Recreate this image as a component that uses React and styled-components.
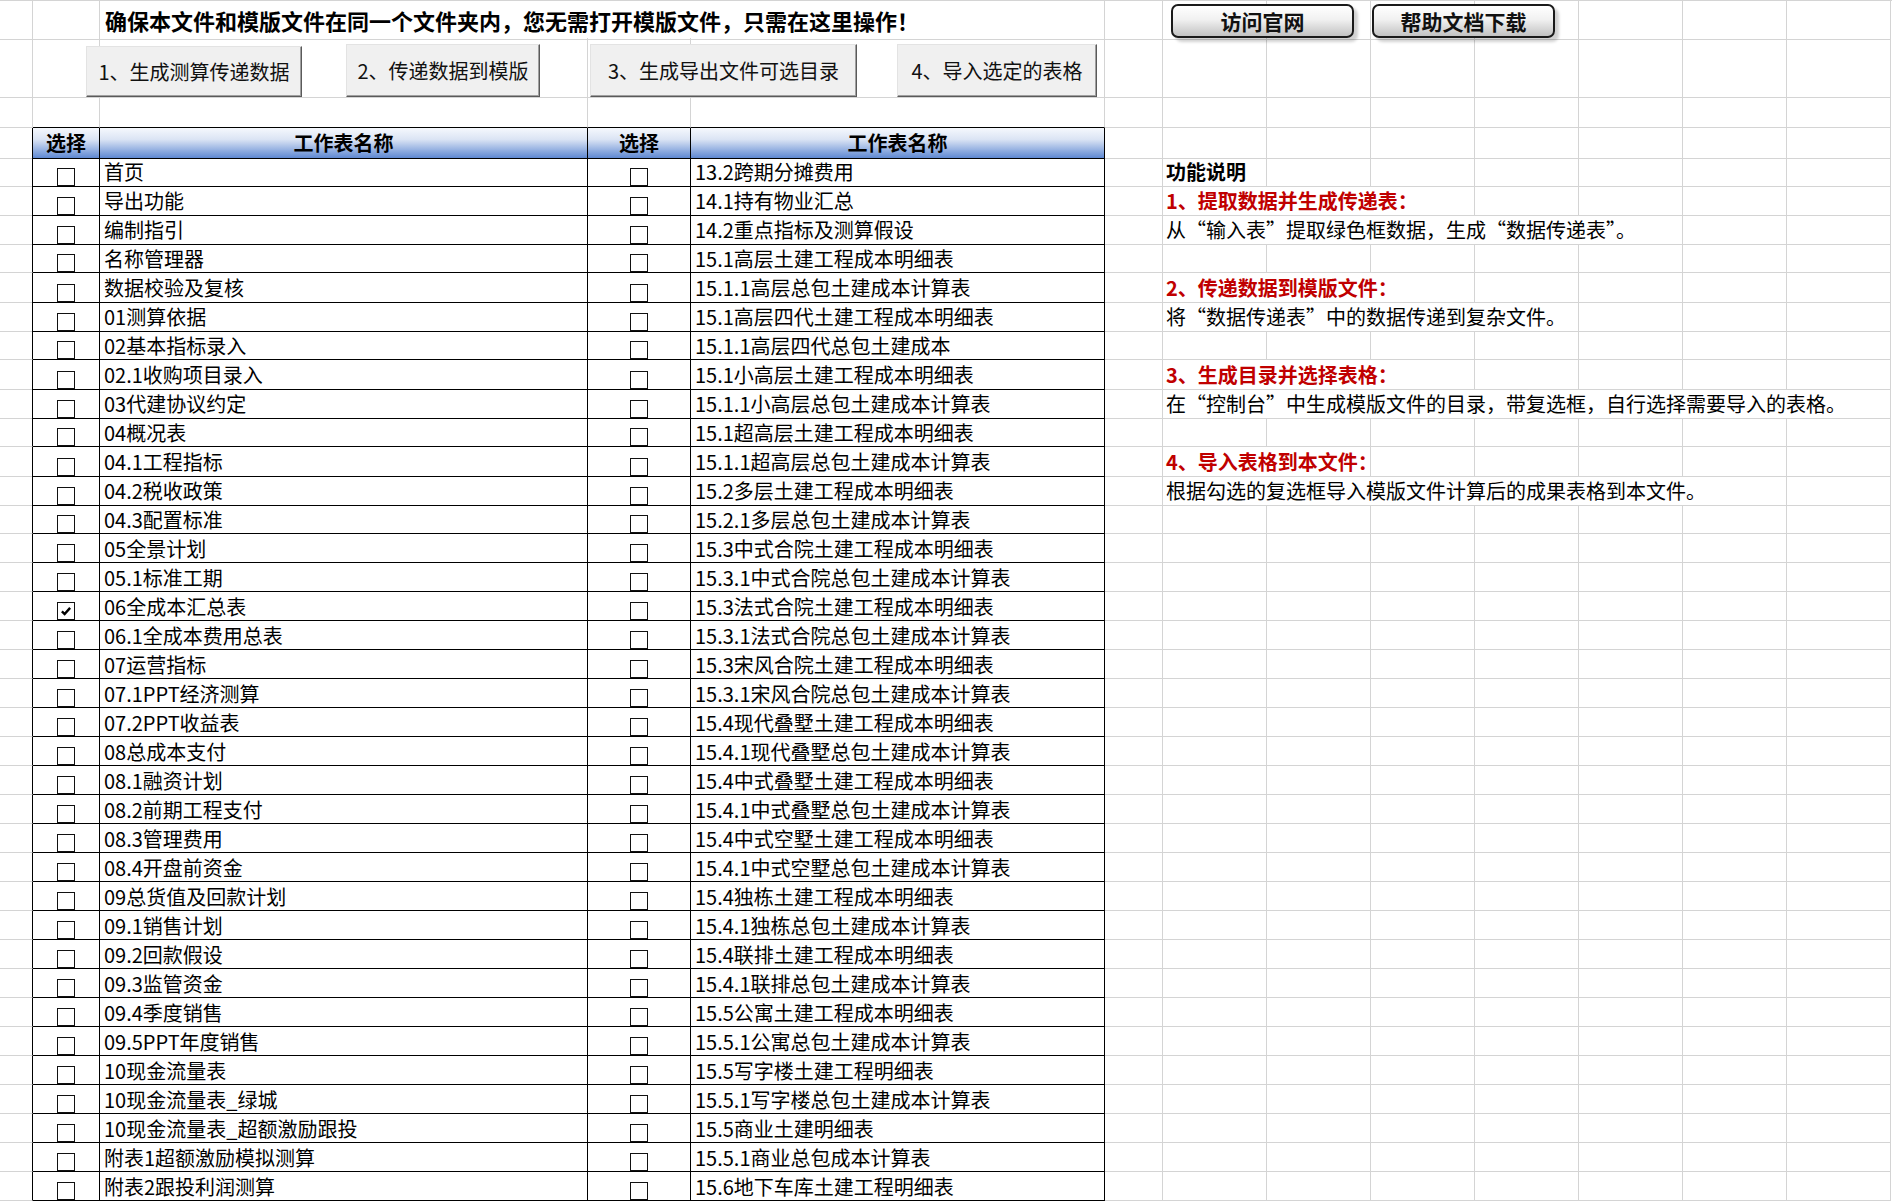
import React from 'react';
import styled, { createGlobalStyle } from 'styled-components';

const FONT = '"Noto Sans CJK SC", "Noto Sans", "Liberation Sans", sans-serif';
const GRID = '#d4d4d4';
const INK = '#000';
const COLS = '33px 67px 488px 103px 414px 58px repeat(7, 104px)';

const LEFT = [
  '首页', '导出功能', '编制指引', '名称管理器', '数据校验及复核', '01测算依据', '02基本指标录入',
  '02.1收购项目录入', '03代建协议约定', '04概况表', '04.1工程指标', '04.2税收政策', '04.3配置标准',
  '05全景计划', '05.1标准工期', '06全成本汇总表', '06.1全成本费用总表', '07运营指标', '07.1PPT经济测算',
  '07.2PPT收益表', '08总成本支付', '08.1融资计划', '08.2前期工程支付', '08.3管理费用', '08.4开盘前资金',
  '09总货值及回款计划', '09.1销售计划', '09.2回款假设', '09.3监管资金', '09.4季度销售', '09.5PPT年度销售',
  '10现金流量表', '10现金流量表_绿城', '10现金流量表_超额激励跟投', '附表1超额激励模拟测算', '附表2跟投利润测算',
];

const RIGHT = [
  '13.2跨期分摊费用', '14.1持有物业汇总', '14.2重点指标及测算假设', '15.1高层土建工程成本明细表',
  '15.1.1高层总包土建成本计算表', '15.1高层四代土建工程成本明细表', '15.1.1高层四代总包土建成本',
  '15.1小高层土建工程成本明细表', '15.1.1小高层总包土建成本计算表', '15.1超高层土建工程成本明细表',
  '15.1.1超高层总包土建成本计算表', '15.2多层土建工程成本明细表', '15.2.1多层总包土建成本计算表',
  '15.3中式合院土建工程成本明细表', '15.3.1中式合院总包土建成本计算表', '15.3法式合院土建工程成本明细表',
  '15.3.1法式合院总包土建成本计算表', '15.3宋风合院土建工程成本明细表', '15.3.1宋风合院总包土建成本计算表',
  '15.4现代叠墅土建工程成本明细表', '15.4.1现代叠墅总包土建成本计算表', '15.4中式叠墅土建工程成本明细表',
  '15.4.1中式叠墅总包土建成本计算表', '15.4中式空墅土建工程成本明细表', '15.4.1中式空墅总包土建成本计算表',
  '15.4独栋土建工程成本明细表', '15.4.1独栋总包土建成本计算表', '15.4联排土建工程成本明细表',
  '15.4.1联排总包土建成本计算表', '15.5公寓土建工程成本明细表', '15.5.1公寓总包土建成本计算表',
  '15.5写字楼土建工程明细表', '15.5.1写字楼总包土建成本计算表', '15.5商业土建明细表',
  '15.5.1商业总包成本计算表', '15.6地下车库土建工程明细表',
];

// help text on the right, keyed by body row; span = how many grid columns the text runs over
const HELP = {
  0: { text: '功能说明', span: 1, tone: 'title' },
  1: { text: '1、提取数据并生成传递表：', span: 3, tone: 'red' },
  2: { text: '从“输入表”提取绿色框数据，生成“数据传递表”。', span: 5 },
  4: { text: '2、传递数据到模版文件：', span: 3, tone: 'red' },
  5: { text: '将“数据传递表”中的数据传递到复杂文件。', span: 4 },
  7: { text: '3、生成目录并选择表格：', span: 3, tone: 'red' },
  8: { text: '在“控制台”中生成模版文件的目录，带复选框，自行选择需要导入的表格。', span: 7 },
  10: { text: '4、导入表格到本文件：', span: 2, tone: 'red' },
  11: { text: '根据勾选的复选框导入模版文件计算后的成果表格到本文件。', span: 6 },
};

const ACTIONS = [
  { label: '1、生成测算传递数据', w: 216, ml: 53, mt: 2 },
  { label: '2、传递数据到模版', w: 194, ml: 44, mt: 0 },
  { label: '3、生成导出文件可选目录', w: 267, ml: 50, mt: 0 },
  { label: '4、导入选定的表格', w: 200, ml: 40, mt: 0 },
];

const GlobalStyle = createGlobalStyle`
  html, body {
    margin: 0;
    padding: 0;
    background: #fff;
    overflow: hidden;
  }
`;

const Sheet = styled.div`
  width: 1892px;
  border-top: 1px solid ${GRID};
  font-family: ${FONT};
  color: #000;
`;

const Row = styled.div`
  display: grid;
  grid-template-columns: ${COLS};
  height: ${p => p.$h}px;
`;

const Cell = styled.div`
  box-sizing: border-box;
  min-width: 0;
  grid-column: span ${p => p.$span || 1};
  border-right: 1px solid ${p => p.$br || GRID};
  border-bottom: 1px solid ${p => p.$bb || GRID};
`;

const TitleCell = styled(Cell)`
  padding-left: 5px;
  font-size: 22px;
  font-weight: 700;
  line-height: 38px;
  white-space: nowrap;
`;

const HeaderCell = styled(Cell)`
  background: linear-gradient(to bottom, #f5f8fd 0%, #dbe4f4 38%, #9bb5e3 70%, #5f89d2 100%);
  text-align: center;
  font-size: 20px;
  font-weight: 700;
  line-height: 30px;
`;

const NameCell = styled(Cell)`
  padding-left: 4px;
  font-size: 20px;
  line-height: 29px;
  white-space: nowrap;
  overflow: hidden;
`;

const CheckCell = styled(Cell)`
  display: flex;
  justify-content: center;
  align-items: flex-end;
`;

const Box = styled.span`
  box-sizing: border-box;
  width: 18px;
  height: 18px;
  border: 1.5px solid #111;
  background: #fff;
  display: flex;
  align-items: center;
  justify-content: center;
`;

const HelpCell = styled(Cell)`
  padding-left: 3px;
  font-size: 20px;
  line-height: 29px;
  white-space: nowrap;
  font-weight: ${p => (p.$tone ? 700 : 400)};
  color: ${p => (p.$tone === 'red' ? '#c00000' : '#000')};
`;

// floating sheet shapes anchored in a cell and spilling over the grid
const ActionBar = styled.div`
  position: relative;
  z-index: 2;
  display: flex;
  align-items: flex-start;
  width: max-content;
  padding-top: 6px;
`;

const ActionButton = styled.button`
  box-sizing: border-box;
  width: ${p => p.$w}px;
  height: ${p => 53 - p.$mt}px;
  margin-left: ${p => p.$ml}px;
  margin-top: ${p => p.$mt}px;
  padding: 0;
  background: #f0f0f0;
  border: 1px solid;
  border-color: #e3e3e3 #5a5a5a #5a5a5a #e3e3e3;
  box-shadow: inset -1px -1px 0 #a0a0a0;
  font-family: ${FONT};
  font-size: 20px;
  color: #111;
`;

const LinkBar = styled.div`
  position: relative;
  z-index: 2;
  display: flex;
  gap: 18px;
  width: max-content;
  padding: 3px 0 0 8px;
`;

const LinkButton = styled.button`
  box-sizing: border-box;
  width: 183px;
  height: 34px;
  padding: 0;
  border: 2px solid #1a1a1a;
  border-radius: 7px;
  background: linear-gradient(to bottom, #ffffff 0%, #f1f1f1 45%, #c2c2c2 100%);
  box-shadow: 4px 4px 3px rgba(0, 0, 0, 0.18);
  font-family: ${FONT};
  font-size: 21px;
  font-weight: 700;
  color: #111;
`;

const blanks = n => Array.from({ length: n }, (_, k) => <Cell key={`b${k}`} />);

const CheckBox = ({ checked }) => (
  <Box>
    {checked && (
      <svg width="12" height="12" viewBox="0 0 14 14">
        <path d="M2.2 7.4 L5.4 10.6 L11.8 3.4" fill="none" stroke="#000" strokeWidth="2.8" />
      </svg>
    )}
  </Box>
);

const BodyRow = ({ i }) => {
  const help = HELP[i];
  return (
    <Row $h={29}>
      <Cell $br={INK} />
      <CheckCell $br={INK} $bb={INK}>
        <CheckBox checked={i === 15} />
      </CheckCell>
      <NameCell $br={INK} $bb={INK}>{LEFT[i]}</NameCell>
      <CheckCell $br={INK} $bb={INK}>
        <CheckBox />
      </CheckCell>
      <NameCell $br={INK} $bb={INK}>{RIGHT[i]}</NameCell>
      <Cell />
      {help ? (
        <HelpCell $span={help.span} $tone={help.tone}>{help.text}</HelpCell>
      ) : (
        <Cell />
      )}
      {blanks(7 - (help ? help.span : 1))}
    </Row>
  );
};

const App = () => {
  return (
    <>
      <GlobalStyle />
      <Sheet>
        {/* title row with the two link buttons */}
        <Row $h={37}>
          <Cell />
          <Cell />
          <TitleCell $span={3}>确保本文件和模版文件在同一个文件夹内，您无需打开模版文件，只需在这里操作！</TitleCell>
          <Cell />
          <Cell>
            <LinkBar>
              <LinkButton>访问官网</LinkButton>
              <LinkButton>帮助文档下载</LinkButton>
            </LinkBar>
          </Cell>
          {blanks(6)}
        </Row>

        {/* action buttons */}
        <Row $h={29}>
          <Cell />
          <Cell>
            <ActionBar>
              {ACTIONS.map(a => (
                <ActionButton key={a.label} $w={a.w} $ml={a.ml} $mt={a.mt}>
                  {a.label}
                </ActionButton>
              ))}
            </ActionBar>
          </Cell>
          {blanks(11)}
        </Row>

        <Row $h={61}>
          <Cell />
          <Cell $bb={INK} />
          <Cell $bb={INK} />
          <Cell $bb={INK} />
          <Cell $bb={INK} />
          {blanks(8)}
        </Row>

        {/* table header */}
        <Row $h={29}>
          <Cell $br={INK} />
          <HeaderCell $br={INK} $bb={INK}>选择</HeaderCell>
          <HeaderCell $br={INK} $bb={INK}>工作表名称</HeaderCell>
          <HeaderCell $br={INK} $bb={INK}>选择</HeaderCell>
          <HeaderCell $br={INK} $bb={INK}>工作表名称</HeaderCell>
          {blanks(8)}
        </Row>

        {LEFT.map((_, i) => (
          <BodyRow key={i} i={i} />
        ))}
      </Sheet>
    </>
  );
};

export default App;
